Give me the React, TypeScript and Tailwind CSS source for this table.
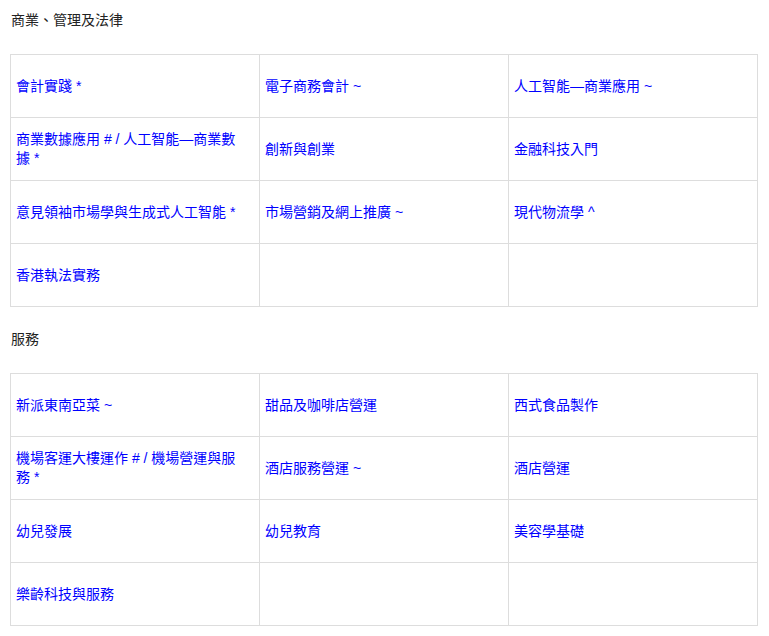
import React from "react";

const sections: { title: string; items: string[] }[] = [
  {
    title: "商業、管理及法律",
    items: [
      "會計實踐 *",
      "電子商務會計 ~",
      "人工智能—商業應用 ~",
      "商業數據應用 # / 人工智能—商業數據 *",
      "創新與創業",
      "金融科技入門",
      "意見領袖市場學與生成式人工智能 *",
      "市場營銷及網上推廣 ~",
      "現代物流學 ^",
      "香港執法實務",
      "",
      "",
    ],
  },
  {
    title: "服務",
    items: [
      "新派東南亞菜 ~",
      "甜品及咖啡店營運",
      "西式食品製作",
      "機場客運大樓運作 # / 機場營運與服務 *",
      "酒店服務營運 ~",
      "酒店營運",
      "幼兒發展",
      "幼兒教育",
      "美容學基礎",
      "樂齡科技與服務",
      "",
      "",
    ],
  },
];

export default function App() {
  return (
    <div
      className="min-h-[636px] w-[769px] bg-white pl-[10px] pt-[10px] text-[14px] leading-[19px]"
      style={{ fontFamily: '"Liberation Sans", "Noto Sans CJK TC", sans-serif' }}
    >
      {sections.map((s, i) => (
        <div key={s.title} className={i > 0 ? "mt-[22px]" : ""}>
          <h2 className="pl-px leading-[20px] font-normal text-[#222222]">{s.title}</h2>
          <div className="mt-[24px] grid w-[748px] grid-cols-[249px_249px_249px] border-l border-t border-[#dddddd]">
            {s.items.map((it, j) => (
              <div
                key={j}
                className="flex h-[63px] items-center border-b border-r border-[#dddddd] pl-[5px] pr-[16px]"
              >
                {it && <a className="text-[#0000ff] cursor-pointer">{it}</a>}
              </div>
            ))}
          </div>
        </div>
      ))}
    </div>
  );
}
